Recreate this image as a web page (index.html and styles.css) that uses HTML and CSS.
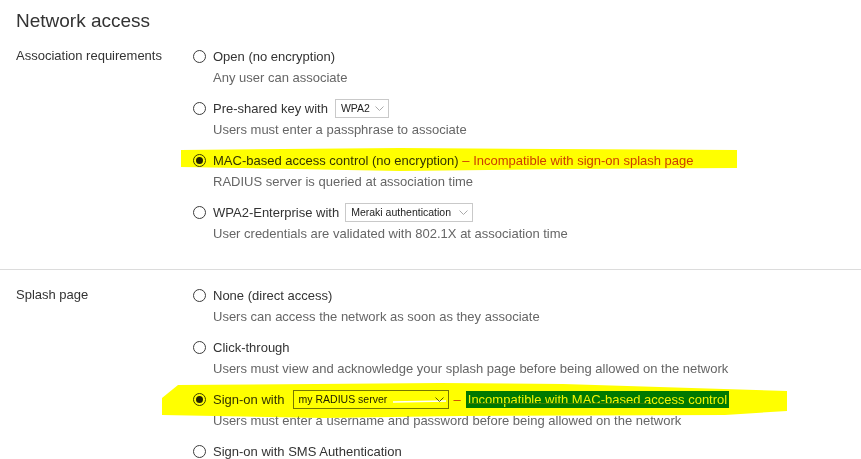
FILE: index.html
```html
<!DOCTYPE html>
<html lang="en">
<head>
    <meta charset="UTF-8">
    <title>Network access</title>
    <link rel="stylesheet" href="styles.css">
</head>
<body>

<div class="page">
    <h1 class="title">Network access</h1>

    <section class="group">
        <div class="group-label">Association requirements</div>
        <div class="options">
            <div class="option">
                <div class="option-line"><span class="radio"></span>Open (no encryption)</div>
                <div class="option-desc">Any user can associate</div>
            </div>
            <div class="option">
                <div class="option-line"><span class="radio"></span>Pre-shared key with
                    <span class="select select-wpa">WPA2<svg class="chevron" viewBox="0 0 9 5"><path d="M0.5 0.5 L4.5 4.5 L8.5 0.5"/></svg></span>
                </div>
                <div class="option-desc">Users must enter a passphrase to associate</div>
            </div>
            <div class="option">
                <div class="option-line"><span class="radio checked"></span>MAC-based access control (no encryption)<span class="warn">&nbsp;– Incompatible with sign-on splash page</span></div>
                <div class="option-desc">RADIUS server is queried at association time</div>
            </div>
            <div class="option">
                <div class="option-line"><span class="radio"></span>WPA2-Enterprise with
                    <span class="select select-meraki">Meraki authentication<svg class="chevron" viewBox="0 0 9 5"><path d="M0.5 0.5 L4.5 4.5 L8.5 0.5"/></svg></span>
                </div>
                <div class="option-desc">User credentials are validated with 802.1X at association time</div>
            </div>
        </div>
    </section>

    <section class="group group-split">
        <div class="group-label">Splash page</div>
        <div class="options">
            <div class="option">
                <div class="option-line"><span class="radio"></span>None (direct access)</div>
                <div class="option-desc">Users can access the network as soon as they associate</div>
            </div>
            <div class="option">
                <div class="option-line"><span class="radio"></span>Click-through</div>
                <div class="option-desc">Users must view and acknowledge your splash page before being allowed on the network</div>
            </div>
            <div class="option">
                <div class="option-line"><span class="radio checked"></span>Sign-on with
                    <span class="select select-radius">my RADIUS server<svg class="chevron" viewBox="0 0 9 5"><path d="M0.5 0.5 L4.5 4.5 L8.5 0.5"/></svg></span>
                    <span class="warn dash">–</span><span class="mark">Incompatible with MAC-based access control</span>
                </div>
                <div class="option-desc">Users must enter a username and password before being allowed on the network</div>
            </div>
            <div class="option">
                <div class="option-line"><span class="radio"></span>Sign-on with SMS Authentication</div>
            </div>
        </div>
    </section>

    <!-- highlighter strokes drawn over the screenshot -->
    <svg class="marker" width="861" height="459" viewBox="0 0 861 459">
        <polygon points="181,150 400,148 737,150 737,168 560,169 400,171 181,167" fill="#ffff00"/>
        <polygon points="178,385 440,383 563,384 787,391 787,411 725,415 460,416 324,418 162,415 162,398" fill="#ffff00"/>
        <polyline points="393,402 446,401" stroke="#ffffff" stroke-width="1.5" fill="none"/>
    </svg>
</div>

</body>
</html>
```

FILE: styles.css
```css
body {
    margin: 0;
    font-family: "Liberation Sans", Arial, sans-serif;
    background-color: #fff;
    color: #333;
    overflow: hidden;
}

.page {
    position: relative;
    box-sizing: border-box;
    padding-top: 9px;
    height: 459px;
    overflow: hidden;
}

.title {
    margin: 0 0 12px 16px;
    font-size: 19px;
    font-weight: normal;
    line-height: 24px;
    color: #333;
}

.group {
    display: grid;
    grid-template-columns: 177px 1fr;
    padding: 0 16px 24px;
    font-size: 13px;
}

.group-split {
    border-top: 1px solid #dcdcdc;
    padding-top: 14px;
}

.group-label {
    line-height: 22px;
    color: #333;
}

.option {
    margin-bottom: 8px;
}

.option:last-child {
    margin-bottom: 0;
}

.option-line {
    display: flex;
    align-items: center;
    height: 22px;
    white-space: nowrap;
    color: #333;
}

.option-desc {
    line-height: 22px;
    padding-left: 20px;
    color: #666;
    white-space: nowrap;
}

.radio {
    width: 11px;
    height: 11px;
    border: 1px solid #3c3c3c;
    border-radius: 50%;
    margin-right: 7px;
    display: flex;
    align-items: center;
    justify-content: center;
    flex: none;
}

.radio.checked::after {
    content: "";
    width: 7px;
    height: 7px;
    border-radius: 50%;
    background-color: #222;
}

.select {
    display: inline-flex;
    align-items: center;
    justify-content: space-between;
    box-sizing: border-box;
    height: 19px;
    margin-left: 7px;
    padding: 0 4px 0 5px;
    border: 1px solid #c9c9c9;
    font-size: 10.5px;
    color: #222;
}

.select-wpa {
    width: 54px;
}

.select-meraki {
    width: 128px;
    margin-left: 6px;
}

.select-radius {
    width: 156px;
    margin-left: 8px;
    border-color: #777;
}

.chevron {
    width: 9px;
    height: 5px;
    fill: none;
    stroke: #aaa;
    stroke-width: 1;
}

.select-radius .chevron {
    stroke: #555;
}

.warn {
    color: #cc3d1a;
}

.dash {
    margin: 0 5px 0 5px;
}

.mark {
    position: relative;
    background-color: #007800;
    color: #f4f400;
    padding: 0 2px;
    line-height: 17px;
}

.mark::after {
    content: "";
    position: absolute;
    left: 2px;
    width: 180px;
    bottom: 4px;
    height: 1px;
    background-color: #3a7bd5;
}

.marker {
    position: absolute;
    left: 0;
    top: 0;
    pointer-events: none;
    mix-blend-mode: multiply;
}
```
